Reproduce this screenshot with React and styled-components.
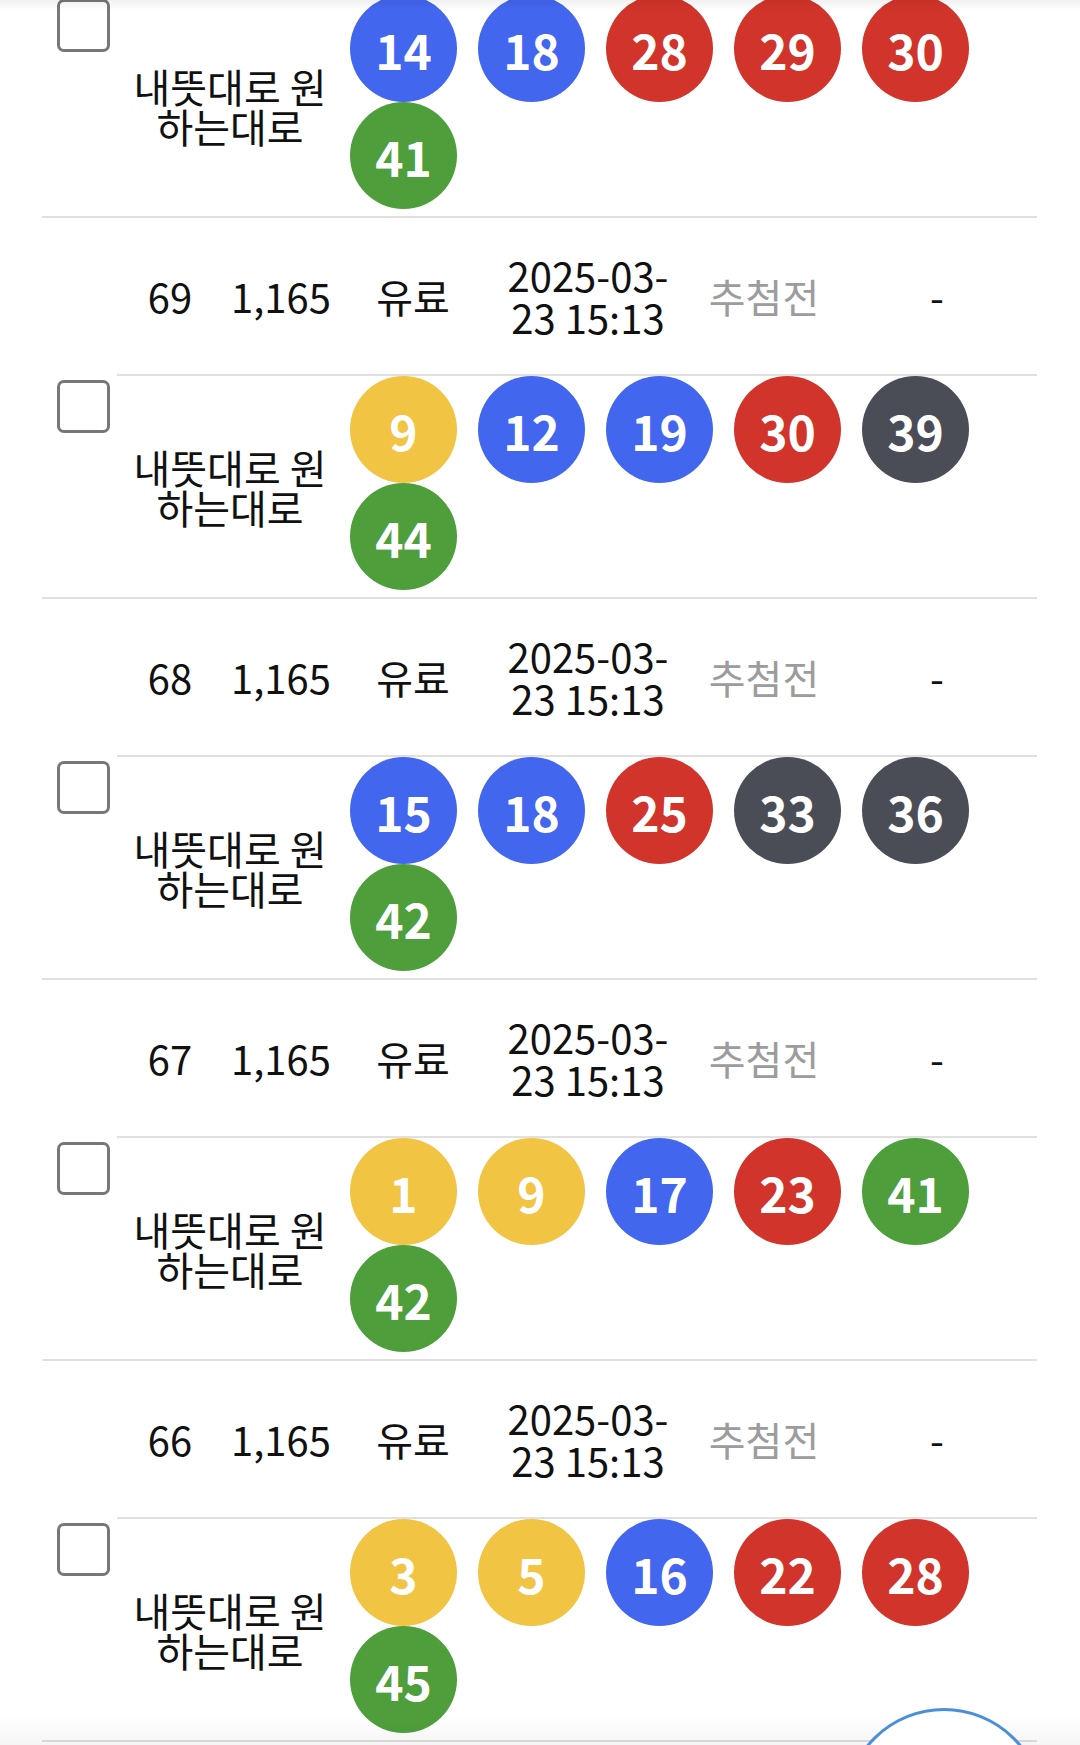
import styled, { createGlobalStyle } from "styled-components";

const GlobalStyle = createGlobalStyle`
  html, body {
    margin: 0;
    padding: 0;
    background: #fff;
    overflow: hidden;
  }
  body {
    font-family: "Noto Sans CJK KR", "Noto Sans", sans-serif;
    color: #111;
  }
`;

const Page = styled.div`
  position: relative;
  width: 1080px;
  height: 1745px;
  overflow: hidden;
`;

// list is scrolled: the first ball row starts a little above the top edge
const List = styled.div`
  margin: -7px 43px 0 42px;
  border-bottom: 2px solid #e0e0e0;
`;

const InfoRow = styled.div`
  display: grid;
  grid-template-columns: 86px 84px 138px 126px 224px 128px 1fr;
  align-items: center;
  height: 158px;
  box-sizing: border-box;
  border-top: 2px solid #e0e0e0;
  font-size: 40px;
`;

const Cell = styled.div`
  text-align: center;
  color: ${(p) => (p.$muted ? "#9c9c9c" : "#111")};
  padding-left: ${(p) => p.$shift || 0}px;
  line-height: 1.05;
`;

const DateText = styled.span`
  display: inline-block;
  max-width: 172px;
`;

const BallRow = styled.div`
  display: flex;
  height: 223px;
`;

const CheckCell = styled.div`
  width: 75px;
  flex: none;
`;

const Checkbox = styled.div`
  width: 53px;
  height: 53px;
  box-sizing: border-box;
  margin: 6px 0 0 15px;
  border: 3px solid #777;
  border-radius: 7px;
`;

const Content = styled.div`
  flex: 1;
  display: flex;
  border-top: 2px solid #e0e0e0;
`;

const Name = styled.div`
  width: 212px;
  margin-left: 7px;
  flex: none;
  align-self: center;
  text-align: center;
  font-size: 40px;
  line-height: 40px;
  color: #111;
`;

const Balls = styled.div`
  display: flex;
  flex-wrap: wrap;
  align-content: flex-start;
  column-gap: 21px;
  padding-left: 14px;
  flex: 1;
`;

const Ball = styled.div`
  width: 107px;
  height: 107px;
  border-radius: 50%;
  background: ${(p) => p.$color};
  color: #fff;
  display: flex;
  align-items: center;
  justify-content: center;
  font-size: 48px;
  font-weight: 700;
  line-height: 1;
`;

const TopShade = styled.div`
  position: absolute;
  left: 0;
  right: 0;
  top: 0;
  height: 10px;
  background: linear-gradient(rgba(0, 0, 0, 0.06), rgba(0, 0, 0, 0));
`;

const BottomShade = styled.div`
  position: absolute;
  left: 0;
  right: 0;
  bottom: 0;
  height: 30px;
  background: linear-gradient(rgba(0, 0, 0, 0), rgba(0, 0, 0, 0.04));
`;

const Fab = styled.div`
  position: absolute;
  right: 36px;
  bottom: -163px;
  width: 200px;
  height: 200px;
  box-sizing: border-box;
  border-radius: 50%;
  border: 3px solid #4a90d9;
  background: #fff;
`;

const colorFor = (n) => {
  if (n <= 10) return "#f1c443";
  if (n <= 20) return "#4266ee";
  if (n <= 30) return "#d0342a";
  if (n <= 40) return "#4b4d56";
  return "#4e9f3c";
};

// first entry is scrolled half out of view, only its numbers show
const entries = [
  { no: 70, balls: [14, 18, 28, 29, 30, 41], partial: true },
  { no: 69, balls: [9, 12, 19, 30, 39, 44] },
  { no: 68, balls: [15, 18, 25, 33, 36, 42] },
  { no: 67, balls: [1, 9, 17, 23, 41, 42] },
  { no: 66, balls: [3, 5, 16, 22, 28, 45] },
];

const Entry = ({ no, balls, partial }) => (
  <>
    {!partial && (
      <InfoRow>
        <Cell />
        <Cell>{no}</Cell>
        <Cell>1,165</Cell>
        <Cell>유료</Cell>
        <Cell>
          <DateText>2025-03-23 15:13</DateText>
        </Cell>
        <Cell $muted>추첨전</Cell>
        <Cell $shift={9}>-</Cell>
      </InfoRow>
    )}
    <BallRow>
      <CheckCell>
        <Checkbox />
      </CheckCell>
      <Content>
        <Name>내뜻대로 원하는대로</Name>
        <Balls>
          {balls.map((n, i) => (
            <Ball key={i} $color={colorFor(n)}>
              {n}
            </Ball>
          ))}
        </Balls>
      </Content>
    </BallRow>
  </>
);

export default function App() {
  return (
    <Page>
      <GlobalStyle />
      <List>
        {entries.map((e) => (
          <Entry key={e.no} {...e} />
        ))}
      </List>
      <TopShade />
      <BottomShade />
      <Fab />
    </Page>
  );
}
